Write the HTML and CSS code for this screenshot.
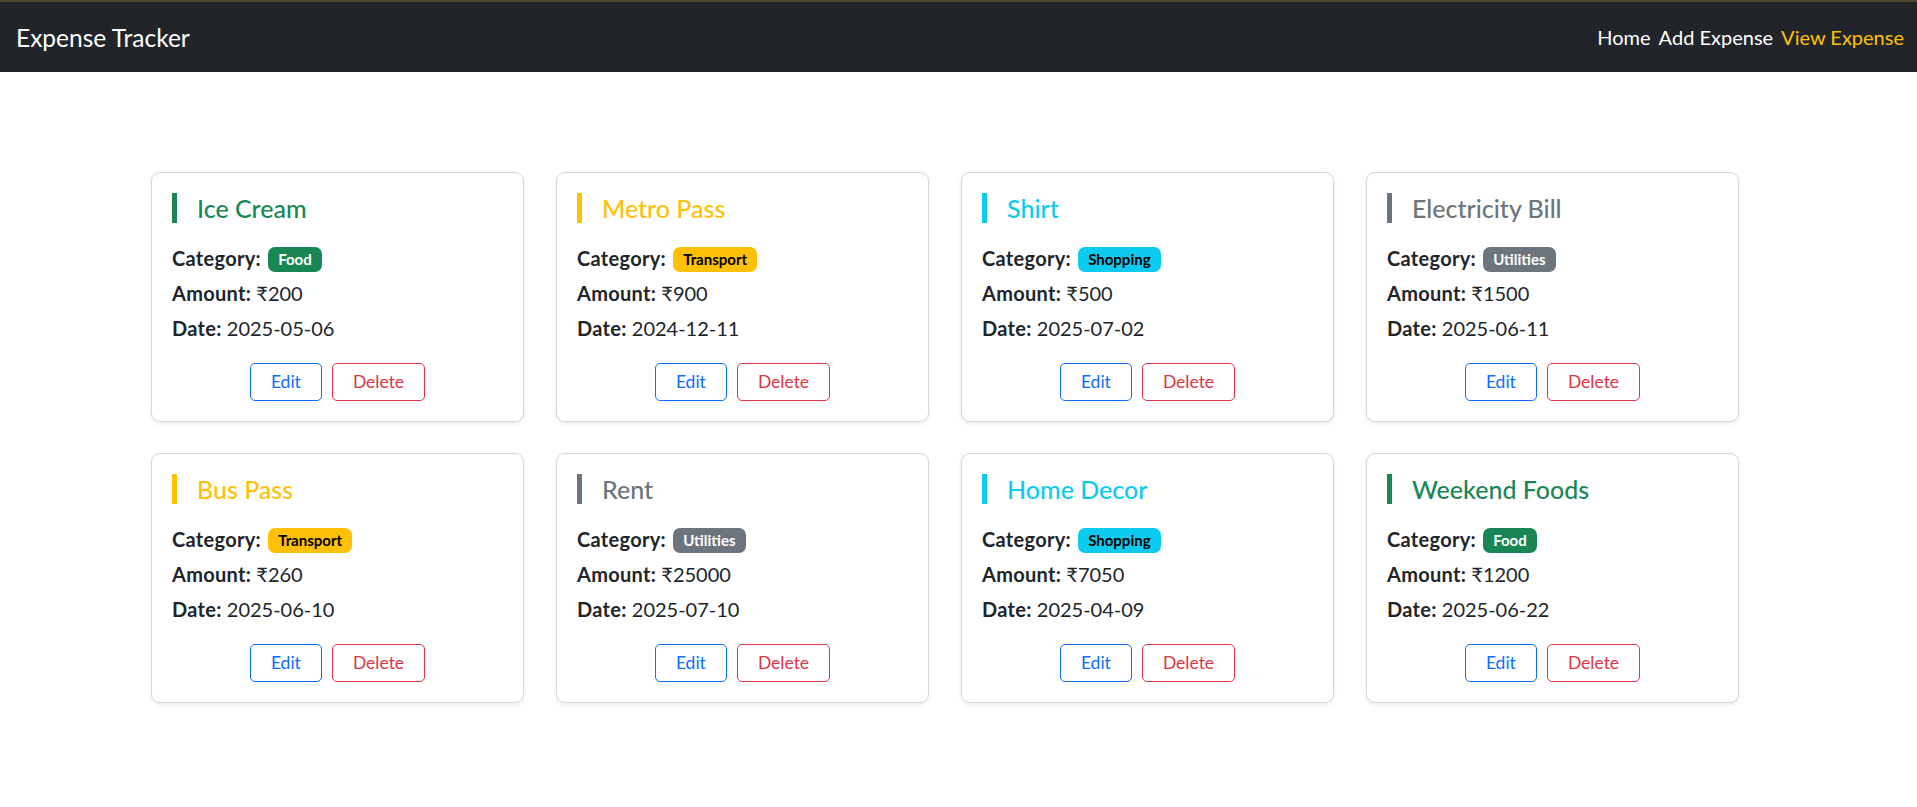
FILE: index.html
```html
<!DOCTYPE html>
<html lang="en">
<head>
<meta charset="utf-8">
<title>Expense Tracker</title>
<link rel="stylesheet" href="styles.css">
</head>
<body>
<nav class="navbar">
  <a class="brand" href="#">Expense Tracker</a>
  <div class="nav-links">
    <a class="nav-link" href="#">Home</a>
    <a class="nav-link" href="#">Add Expense</a>
    <a class="nav-link active" href="#">View Expense</a>
  </div>
</nav>
<main class="page">
  <div class="grid">
    <div class="card">
      <h5 class="title t-success">Ice Cream</h5>
      <p class="line"><strong>Category:</strong> <span class="badge b-success">Food</span></p>
      <p class="line"><strong>Amount:</strong> ₹200</p>
      <p class="line"><strong>Date:</strong> 2025-05-06</p>
      <div class="actions"><button class="btn btn-edit">Edit</button><button class="btn btn-del">Delete</button></div>
    </div>
    <div class="card">
      <h5 class="title t-warning">Metro Pass</h5>
      <p class="line"><strong>Category:</strong> <span class="badge b-warning">Transport</span></p>
      <p class="line"><strong>Amount:</strong> ₹900</p>
      <p class="line"><strong>Date:</strong> 2024-12-11</p>
      <div class="actions"><button class="btn btn-edit">Edit</button><button class="btn btn-del">Delete</button></div>
    </div>
    <div class="card">
      <h5 class="title t-info">Shirt</h5>
      <p class="line"><strong>Category:</strong> <span class="badge b-info">Shopping</span></p>
      <p class="line"><strong>Amount:</strong> ₹500</p>
      <p class="line"><strong>Date:</strong> 2025-07-02</p>
      <div class="actions"><button class="btn btn-edit">Edit</button><button class="btn btn-del">Delete</button></div>
    </div>
    <div class="card">
      <h5 class="title t-secondary">Electricity Bill</h5>
      <p class="line"><strong>Category:</strong> <span class="badge b-secondary">Utilities</span></p>
      <p class="line"><strong>Amount:</strong> ₹1500</p>
      <p class="line"><strong>Date:</strong> 2025-06-11</p>
      <div class="actions"><button class="btn btn-edit">Edit</button><button class="btn btn-del">Delete</button></div>
    </div>
    <div class="card">
      <h5 class="title t-warning">Bus Pass</h5>
      <p class="line"><strong>Category:</strong> <span class="badge b-warning">Transport</span></p>
      <p class="line"><strong>Amount:</strong> ₹260</p>
      <p class="line"><strong>Date:</strong> 2025-06-10</p>
      <div class="actions"><button class="btn btn-edit">Edit</button><button class="btn btn-del">Delete</button></div>
    </div>
    <div class="card">
      <h5 class="title t-secondary">Rent</h5>
      <p class="line"><strong>Category:</strong> <span class="badge b-secondary">Utilities</span></p>
      <p class="line"><strong>Amount:</strong> ₹25000</p>
      <p class="line"><strong>Date:</strong> 2025-07-10</p>
      <div class="actions"><button class="btn btn-edit">Edit</button><button class="btn btn-del">Delete</button></div>
    </div>
    <div class="card">
      <h5 class="title t-info">Home Decor</h5>
      <p class="line"><strong>Category:</strong> <span class="badge b-info">Shopping</span></p>
      <p class="line"><strong>Amount:</strong> ₹7050</p>
      <p class="line"><strong>Date:</strong> 2025-04-09</p>
      <div class="actions"><button class="btn btn-edit">Edit</button><button class="btn btn-del">Delete</button></div>
    </div>
    <div class="card">
      <h5 class="title t-success">Weekend Foods</h5>
      <p class="line"><strong>Category:</strong> <span class="badge b-success">Food</span></p>
      <p class="line"><strong>Amount:</strong> ₹1200</p>
      <p class="line"><strong>Date:</strong> 2025-06-22</p>
      <div class="actions"><button class="btn btn-edit">Edit</button><button class="btn btn-del">Delete</button></div>
    </div>
  </div>
</main>
</body>
</html>
```
FILE: styles.css
```css
* { box-sizing: border-box; }
html, body { margin: 0; padding: 0; }
body {
  font-family: Lato, "Noto Sans", "DejaVu Sans", sans-serif;
  font-size: 20px;
  line-height: 1.5;
  color: #212529;
  background: #fff;
}
.navbar {
  height: 72px;
  background: #212529;
  border-top: 2px solid #4f442c;
  display: flex;
  align-items: center;
  justify-content: space-between;
  padding: 0 13px 0 16px;
}
.brand {
  color: #fff;
  text-decoration: none;
  font-size: 24.5px;
  line-height: 30px;
  margin-top: 2px;
}
.nav-links { display: flex; gap: 8px; }
.nav-link {
  color: #fff;
  text-decoration: none;
  font-size: 20px;
  line-height: 30px;
}
.nav-link.active { color: #ffc107; }
.page { padding: 100px 0 40px 151px; }
.grid {
  display: grid;
  grid-template-columns: repeat(4, 373px);
  column-gap: 32px;
  row-gap: 31px;
}
.card {
  border: 1px solid #d5d6d8;
  border-radius: 9px;
  padding: 20px;
  background: #fff;
  box-shadow: 0 2px 5px rgba(0,0,0,0.08);
}
.title {
  margin: 0 0 20px 0;
  font-size: 25px;
  font-weight: 500;
  line-height: 30px;
  border-left: 5px solid currentColor;
  padding-left: 20px;
}
.t-success { color: #198754; }
.t-warning { color: #ffc107; }
.t-info { color: #0dcaf0; }
.t-secondary { color: #6c757d; }
.line { margin: 0 0 5px 0; line-height: 30px; }
.line strong { font-weight: 700; letter-spacing: 0.3px; }
.badge {
  display: inline-block;
  font-size: 15px;
  font-weight: 700;
  line-height: 1;
  padding: 5px 10px;
  border-radius: 7px;
  vertical-align: 1px;
  margin-left: 2px;
}
.b-success { background: #198754; color: #fff; }
.b-warning { background: #ffc107; color: #000; }
.b-info { background: #0dcaf0; color: #000; }
.b-secondary { background: #6c757d; color: #fff; }
.actions {
  margin-top: 20px;
  display: flex;
  justify-content: center;
  gap: 10px;
}
.btn {
  font-family: inherit;
  font-size: 17.5px;
  line-height: 26px;
  padding: 5px 20px;
  background: #fff;
  border: 1px solid;
  border-radius: 5px;
  cursor: pointer;
}
.btn-edit { color: #0d6efd; border-color: #0d6efd; }
.btn-del { color: #dc3545; border-color: #dc3545; }
```
